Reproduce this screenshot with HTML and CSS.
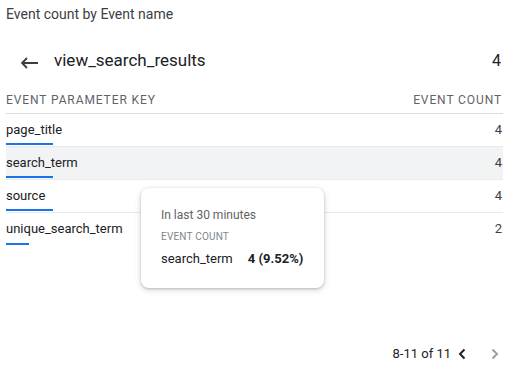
FILE: index.html
```html
<!DOCTYPE html>
<html>
<head>
<meta charset="utf-8">
<link rel="stylesheet" href="styles.css">
</head>
<body>
<div class="card">
  <div class="title">Event count by Event name</div>
  <div class="drill">
    <svg class="back" width="18" height="12" viewBox="0 0 18 12"><path d="M6 1 L1 6 L6 11 M1 6 H17" fill="none" stroke="#3c4043" stroke-width="1.8"/></svg>
    <span class="drill-name">view_search_results</span>
    <span class="drill-val">4</span>
  </div>
  <div class="table">
    <div class="thead">
      <span>EVENT PARAMETER KEY</span>
      <span>EVENT COUNT</span>
    </div>
    <div class="row">
      <span class="key">page_title</span><span class="val">4</span>
      <div class="bar" style="width:47px"></div>
    </div>
    <div class="row hl">
      <span class="key">search_term</span><span class="val">4</span>
      <div class="bar" style="width:47px"></div>
    </div>
    <div class="row">
      <span class="key">source</span><span class="val">4</span>
      <div class="bar" style="width:47px"></div>
    </div>
    <div class="row last">
      <span class="key">unique_search_term</span><span class="val">2</span>
      <div class="bar" style="width:23px"></div>
    </div>
  </div>
  <div class="pager">
    <span class="range">8-11 of 11</span>
    <svg class="chev" width="10" height="12" viewBox="0 0 10 12"><path d="M7.5 1.5 L3 6 L7.5 10.5" fill="none" stroke="#202124" stroke-width="2"/></svg>
    <svg class="chev dis" width="10" height="12" viewBox="0 0 10 12"><path d="M2.5 1.5 L7 6 L2.5 10.5" fill="none" stroke="#9aa0a6" stroke-width="2"/></svg>
  </div>
  <div class="tip">
    <div class="tip-sub">In last 30 minutes</div>
    <div class="tip-head">EVENT COUNT</div>
    <div class="tip-row"><span>search_term</span><b>4 (9.52%)</b></div>
  </div>
</div>
</body>
</html>
```

FILE: styles.css
```css
html, body {
  margin: 0;
  padding: 0;
  background: #fff;
}
body {
  font-family: Roboto, "Noto Sans", Arial, sans-serif;
  color: #202124;
}
.card {
  position: relative;
  width: 509px;
  height: 374px;
  padding: 0 7px 0 6px;
  box-sizing: border-box;
  display: flex;
  flex-direction: column;
}
.title {
  font-size: 14px;
  color: #3c4043;
  line-height: 20px;
  margin-top: 4px;
}
.drill {
  display: flex;
  align-items: center;
  margin-top: 26px;
  height: 20px;
}
.back {
  margin-left: 15px;
  margin-top: 6px;
}
.drill-name {
  margin-left: 15px;
  font-size: 17px;
  flex: 1;
}
.drill-val {
  font-size: 16px;
  margin-right: 1px;
}
.table {
  margin-top: 19px;
}
.thead {
  display: flex;
  justify-content: space-between;
  font-size: 12px;
  letter-spacing: 0.9px;
  color: #5f6368;
  height: 25px;
  line-height: 16px;
  padding-top: 3px;
  box-sizing: border-box;
  border-bottom: 1px solid #dadce0;
  padding-right: 1px;
  margin-right: -1px;
}
.row {
  position: relative;
  display: flex;
  justify-content: space-between;
  height: 33px;
  font-size: 13px;
  line-height: 33px;
  border-bottom: 1px solid #e8eaed;
  box-sizing: border-box;
  padding-right: 1px;
  margin-right: -1px;
}
.row .key {
  margin-top: -1px;
  color: #202124;
}
.row .val {
  margin-top: -1px;
  color: #3c4043;
}
.row.hl {
  background: #f1f3f4;
}
.row.last {
  border-bottom: none;
}
.bar {
  position: absolute;
  left: 0;
  bottom: 1px;
  height: 2px;
  background: #1a73e8;
}
.pager {
  margin-top: auto;
  margin-bottom: 13px;
  display: flex;
  align-items: center;
  justify-content: flex-end;
  font-size: 13px;
  color: #202124;
}
.range {
  margin-right: 6px;
  white-space: nowrap;
}
.chev.dis {
  margin-left: 23px;
  margin-right: 2px;
}
.tip {
  position: absolute;
  left: 141px;
  top: 188px;
  width: 183px;
  height: 100px;
  box-sizing: border-box;
  background: #fff;
  border-radius: 8px;
  box-shadow: 0 1px 3px rgba(60,64,67,0.3), 0 2px 6px 1px rgba(60,64,67,0.12);
  padding: 19px 0 0 20px;
  white-space: nowrap;
}
.tip-sub {
  font-size: 12px;
  color: #5f6368;
  line-height: 16px;
}
.tip-head {
  margin-top: 7px;
  font-size: 10px;
  letter-spacing: 0.2px;
  color: #80868b;
  line-height: 14px;
}
.tip-row {
  margin-top: 7px;
  font-size: 13px;
  line-height: 16px;
  display: flex;
  gap: 15px;
}
.tip-row b {
  font-weight: 700;
}
```
